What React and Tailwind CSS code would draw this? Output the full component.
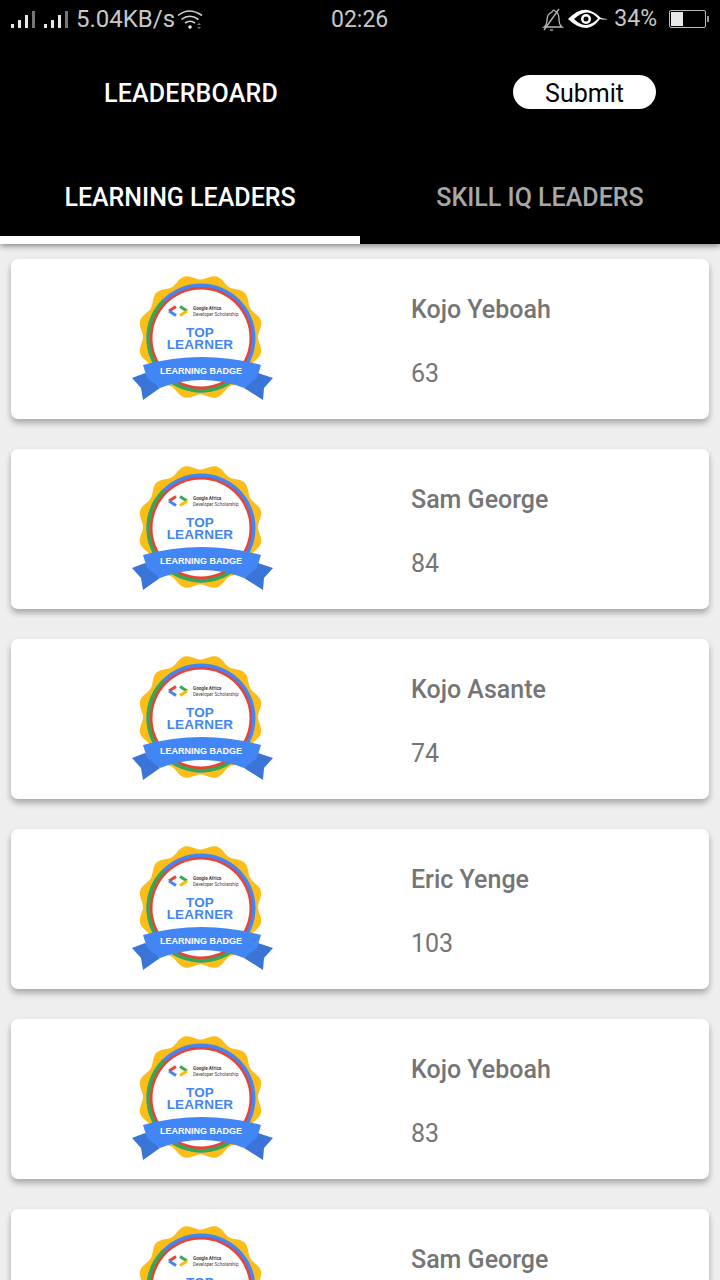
import React from "react";

const leaders = [
    { name: "Kojo Yeboah", score: 63 },
    { name: "Sam George", score: 84 },
    { name: "Kojo Asante", score: 74 },
    { name: "Eric Yenge", score: 103 },
    { name: "Kojo Yeboah", score: 83 },
    { name: "Sam George", score: 91 },
];

// wavy outline of the yellow badge seal
const scallop = () => {
    const pts = [];
    for (let i = 0; i < 240; i++) {
        const t = (i / 240) * Math.PI * 2;
        const r = 60 - 2.5 * Math.cos(12 * t);
        pts.push(`${(70.5 + r * Math.sin(t)).toFixed(1)},${(62 - r * Math.cos(t)).toFixed(1)}`);
    }
    return pts.join(" ");
};

const Badge = () => (
    <svg width="144" height="128" viewBox="0 0 144 128" className="shrink-0">
        <polygon points={scallop()} fill="#fdbd19" />
        <circle cx="71" cy="63" r="54.500" fill="#4285f4" />
        <path d="M16.500 63a54.500 54.500 0 0 0 54.500 54.500a54.500 54.500 0 0 0 38.500-16L32.500 24.500a54.500 54.500 0 0 0-16 38.500z" fill="#34a853" />
        <circle cx="71" cy="63" r="51" fill="#ea4335" />
        <circle cx="71" cy="63" r="48.500" fill="#fff" />
        {/* Google dev chevrons */}
        <path d="M46 31.500l-7 4.500" fill="none" stroke="#ea4335" strokeWidth="3" />
        <path d="M39 36l7 4.500" fill="none" stroke="#4285f4" strokeWidth="3" />
        <path d="M50 31.500l7 4.500" fill="none" stroke="#34a853" strokeWidth="3" />
        <path d="M57 36l-7 4.500" fill="none" stroke="#fbbc05" strokeWidth="3" />
        <text x="63" y="35" fontSize="4.600" fontWeight="700" fill="#444" fontFamily="Roboto, sans-serif">
            Google Africa
        </text>
        <text x="63" y="40.500" fontSize="4.600" fill="#444" fontFamily="Roboto, sans-serif">
            Developer Scholarship
        </text>
        <text x="70" y="62" textAnchor="middle" fontSize="13.500" fontWeight="700" letterSpacing="0.2" fill="#4285f4" fontFamily="'Liberation Sans', sans-serif">
            TOP
        </text>
        <text x="70" y="74" textAnchor="middle" fontSize="13.500" fontWeight="700" letterSpacing="0.2" fill="#4285f4" fontFamily="'Liberation Sans', sans-serif">
            LEARNER
        </text>
        {/* ribbon */}
        <path d="M2 103l9 10 2 12 17-12-15-15z" fill="#3a74d6" />
        <path d="M143 103l-9 10-1 12-19-12 14-15z" fill="#3a74d6" />
        <path d="M13 90Q72 74 131 90L127 103 114 113Q72 97 30 113L17 103z" fill="#4285f4" />
        <text x="71" y="99" textAnchor="middle" fontSize="9" fontWeight="700" fill="#fff" fontFamily="'Liberation Sans', sans-serif">
            LEARNING BADGE
        </text>
    </svg>
);

const Signal = () => (
    <div className="flex items-end gap-[4px] h-[17px]">
        <div className="w-[3px] h-[4px] bg-[#e6e6e6]" />
        <div className="w-[3px] h-[8px] bg-[#e6e6e6]" />
        <div className="w-[3px] h-[13px] bg-[#e6e6e6]" />
        <div className="w-[3px] h-[17px] bg-[#777]" />
    </div>
);

const Wifi = () => (
    <svg width="27" height="22" viewBox="0 0 27 22" fill="none" stroke="#d0d0d0" strokeWidth="1.600">
        <path d="M1 7.500q11-9 24 0" />
        <path d="M4.500 11.500q8-6.500 17 0" />
        <path d="M8 15q5-3.500 10 0" />
        <circle cx="13" cy="19" r="1.800" fill="#e6e6e6" stroke="none" />
        <path d="M20 17l2-2 2 2zM20 19l2 2 2-2z" fill="#777" stroke="none" />
    </svg>
);

const MutedBell = () => (
    <svg width="22" height="24" viewBox="0 0 22 24" fill="none" stroke="#b8b8b8" strokeWidth="1.300">
        <path d="M2 20q3-2 3-7q0-6 5-8q1-3 3-1q4 2 4 8q0 6 3 8z" />
        <path d="M8 23h3" />
        <path d="M2 23L17 2" />
    </svg>
);

const Eye = () => (
    <svg width="42" height="22" viewBox="0 0 42 22" fill="none">
        <path d="M1 11Q12 0 21 2q7 2 13 8q4 1 7 1q-4 1-8 0q-6 8-13 9Q10 20 1 11z" fill="#fff" />
        <path d="M7 11q7-6.500 13-6.500q6 0 11 6q-6 6.500-12 6.500q-6 0-12-6z" fill="#000" />
        <circle cx="19" cy="11" r="5" fill="#fff" />
        <circle cx="19" cy="11" r="2.500" fill="#000" />
    </svg>
);

const Battery = () => (
    <div className="flex items-center">
        <div className="w-[37px] h-[18px] border border-[#bbb] rounded-[2px] p-[1px]">
            <div className="w-[12px] h-full bg-[#e8e8e8]" />
        </div>
        <div className="w-[2px] h-[6px] ml-[1px] bg-[#999]" />
    </div>
);

const StatusBar = () => (
    <div className="relative h-[38px] flex items-center justify-between pl-[11px] pr-[11px] text-[#c8c8c8] text-[23px] bg-black">
        <div className="flex items-center">
            <Signal />
            <div className="w-[9px]" />
            <Signal />
            <span className="ml-[8px] text-[24px]">5.04KB/s</span>
            <div className="ml-[2px]">
                <Wifi />
            </div>
        </div>
        <span className="absolute left-[331px] top-[3px]">02:26</span>
        <div className="flex items-center">
            <MutedBell />
            <div className="ml-[3px]">
                <Eye />
            </div>
            <span className="ml-[5px]">34%</span>
            <div className="ml-[12px]">
                <Battery />
            </div>
        </div>
    </div>
);

const LeaderCard = ({ leader }) => (
    <div className="shrink-0 h-[160px] bg-white rounded-[7px] shadow-[0_4px_6px_rgba(0,0,0,0.3)] flex items-center text-[#757575]">
        <div className="w-[400px] pl-[119px]">
            <Badge />
        </div>
        <div className="flex flex-col pt-[6px]">
            <span className="text-[25px] leading-[32px] font-medium">{leader.name}</span>
            <span className="text-[25px] leading-[32px] mt-[32px]">{leader.score}</span>
        </div>
    </div>
);

const App = () => {
    return (
        <div className="h-[1280px] overflow-hidden bg-[#eeeeee] font-['Roboto',sans-serif]">
            <StatusBar />

            {/* Title */}
            <div className="h-[110px] bg-black flex items-start pt-[37px] pl-[104px] pr-[64px] justify-between">
                <h1 className="text-[25px] leading-[36px] mt-[1px] tracking-[0.2px] font-medium text-white">LEADERBOARD</h1>
                <button className="w-[143px] h-[34px] pt-[4px] rounded-full bg-white text-black text-[25px] leading-[30px]">
                    Submit
                </button>
            </div>

            {/* Tabs */}
            <div className="h-[96px] bg-black flex shadow-[0_2px_6px_rgba(0,0,0,0.45)]">
                <div className="w-1/2 flex items-start justify-center pt-[34px] border-b-[8px] border-white text-white text-[25px] leading-[32px] font-medium">
                    LEARNING LEADERS
                </div>
                <div className="w-1/2 flex items-start justify-center pt-[34px] text-[#a8a8a8] text-[25px] leading-[32px] font-medium">
                    SKILL IQ LEADERS
                </div>
            </div>

            <div className="flex flex-col gap-[30px] pt-[15px] px-[11px]">
                {leaders.map((leader, i) => (
                    <LeaderCard key={i} leader={leader} />
                ))}
            </div>
        </div>
    );
};

export default App;
